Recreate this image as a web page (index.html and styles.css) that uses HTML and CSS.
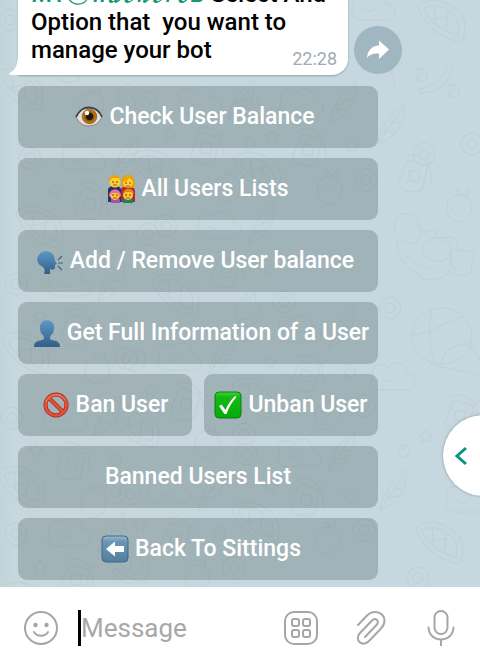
FILE: index.html
```html
<!DOCTYPE html>
<html lang="en">
<head>
<meta charset="utf-8">
<meta name="viewport" content="width=device-width, initial-scale=1">
<title>Chat</title>
<link rel="stylesheet" href="styles.css">
</head>
<body>
<div class="app">
  <main class="chat">
    <svg class="wallpaper" viewBox="0 0 480 587" preserveAspectRatio="xMaxYMax slice" aria-hidden="true">
      <defs>
        <g id="berry"><path d="M0 8c2-9 20-9 23 0 3 10-4 20-12 20S-3 20 0 8zM8 2l2-7 4 5 6-5-1 8"/><path d="M5 9v1m6-2v1m6-1v1M4 15v1m6-2v1m7-1v1M8 21v1m7-2v1"/></g>
        <g id="swirl"><path d="M0 6c2-8 13-7 13 1s-10 8-10 2 6-6 6-2"/></g>
        <g id="star"><path d="M6 0l2 4 5 1-4 3 1 5-4-3-4 3 1-5-4-3 5-1z"/></g>
        <g id="slice"><path d="M0 6C10-6 40 2 46 20c2 8 0 20-2 22C26 40 6 28 0 6zM6 9c12-8 28 0 34 12 1 6 1 10 0 14C26 32 12 24 6 9zM16 6l2 18m12-12l-2 18M14 20l18-4"/></g>
        <g id="ball"><ellipse cx="30" cy="28" rx="30" ry="28"/><path d="M20 2c-4 18-2 36 2 52M0 28c20-4 36-14 50-20M30 56c0-16 14-20 28-20M18 56l62 14-24-36"/></g>
        <g id="cat"><path d="M4 20C-4 4 14-4 24 6l6 14 14-2c-2 8 6 8 10 8 8-4 14 4 10 12l18 2c0 8-4 12-2 20-8 6-18 4-22-2-6 12-30 14-34 2-12-4-22-20-18-34M10 28c8 6 16 6 20-8M30 36c6-14 24-14 30 2-2 14-26 16-30-2M58 40c2 8 0 14 6 18M12 44c10 4 12 10 24 12"/></g>
        <g id="cup"><path d="M10 2L30 8l-6 24c-8 4-20 2-24-6zM30 8l6-6M12 12l10 2-2 10-10-2zM6 0c4-6 18-4 26 8M32 12l2 14"/></g>
        <g id="cloud"><path d="M2 14C-4 4 10-2 16 6c6-10 20-4 18 6 12 0 12 16 0 16H12C2 30-4 20 2 14zM10 16c4 4 10 4 14 0"/></g>
        <g id="leaf"><path d="M0 40C2 22 14 8 26 0c2 14-4 32-26 40zM0 40L24 4M8 28l10-2M12 20l10-2M6 32l2-12"/></g>
        <g id="ring"><circle cx="10" cy="10" r="11"/><circle cx="10" cy="10" r="5"/></g>
        <g id="patch"><use href="#ring" x="6" y="8"/><use href="#cloud" x="48" y="2"/><use href="#leaf" x="98" y="-4"/><use href="#star" x="34" y="44"/><use href="#cup" x="60" y="46"/><use href="#swirl" x="112" y="52"/><use href="#slice" x="2" y="66"/><use href="#berry" x="86" y="90"/><use href="#ring" x="124" y="84"/></g>
      </defs>
      <use href="#patch" x="-6" y="2"/><use href="#patch" x="130" y="84"/><use href="#patch" x="14" y="140"/>
      <use href="#patch" x="232" y="86"/><use href="#patch" x="150" y="208"/><use href="#patch" x="0" y="266"/>
      <use href="#patch" x="230" y="312"/><use href="#patch" x="110" y="340"/><use href="#patch" x="-4" y="400"/>
      <use href="#patch" x="230" y="436"/><use href="#patch" x="100" y="474"/><use href="#patch" x="0" y="516"/>
      <use href="#slice" x="418" y="0"/><use href="#cloud" x="352" y="-8"/><path d="M418 90c14-4 22-8 30-24M418 92c18 4 32-10 34-24M394 66c-8 10 6 14-2 24"/>
      <use href="#swirl" x="446" y="84"/><use href="#leaf" x="378" y="104"/><use href="#swirl" x="414" y="68"/>
      <use href="#ring" x="462" y="134"/><use href="#cup" x="398" y="158"/><use href="#ring" x="414" y="144"/>
      <use href="#berry" x="448" y="194"/><use href="#cat" x="392" y="212"/><use href="#ring" x="380" y="298"/>
      <use href="#ball" x="412" y="308"/><use href="#cloud" x="372" y="362"/><use href="#cup" x="444" y="398"/>
      <use href="#star" x="420" y="430"/><use href="#swirl" x="396" y="444"/><use href="#leaf" x="380" y="470"/>
      <use href="#slice" x="416" y="522"/><use href="#ring" x="408" y="568"/><use href="#cloud" x="446" y="484"/>
    </svg>

    <div class="message-row">
      <article class="bubble">
        <p class="bubble-text"><a class="bubble-link" href="#">MYⓂ<span class="script">𝓗𝓪𝓬𝓴𝓮𝓻𝓸</span>B</a> Select And Option that&nbsp; you want to manage your bot</p>
        <time class="bubble-time">22:28</time>
        <svg class="tail" viewBox="0 0 10 20" aria-hidden="true"><path d="M10 0v20H1c-1 0-1-1 0-2C6 15 9 10 9 0z"/></svg>
      </article>
      <button class="share" type="button" aria-label="Share">
        <svg viewBox="0 0 24 22" aria-hidden="true"><path d="M13 1.500L23 10.500 13 20v-5.500C7 14 3.500 15.500 1 19 1.500 11 6 7 13 6.500z"/></svg>
      </button>
    </div>

    <div class="keyboard">
      <button class="key trailing" type="button">
        <svg class="emoji" viewBox="0 0 28 28" aria-hidden="true">
          <defs><radialGradient id="iris"><stop offset=".3" stop-color="#3b210b"/><stop offset=".6" stop-color="#98600e"/><stop offset="1" stop-color="#c08317"/></radialGradient></defs>
          <path d="M1 14C5 7 9 5 14 5s10 3 13 9c-3 6-7 9-13 9S4 20 1 14z" fill="#e3dddc" stroke="#8b8585"/>
          <path d="M1 14C5 6 9 4.500 14 4.500S24 7 27 14" fill="none" stroke="#42454a" stroke-width="1.800"/>
          <circle cx="14.500" cy="13.500" r="7.300" fill="url(#iris)" stroke="#70480f" stroke-width=".6"/><circle cx="14.500" cy="13.500" r="3.400" fill="#25160b"/><circle cx="12" cy="10" r="2.200" fill="#fff"/>
        </svg><span>Check User Balance</span>
      </button>
      <button class="key" type="button">
        <svg class="emoji" viewBox="0 0 28 28" aria-hidden="true">
          <path d="M1 27V15c0-3 3-4 7-4s6 2 6 4v12z" fill="#25326f"/><path d="M14 27V15c0-3 3-4 7-4s7 2 7 5v11z" fill="#b32735"/>
          <path d="M15 12c-1-8 1-12 6-12s8 5 6 13z" fill="#e89b05"/><circle cx="8" cy="7" r="5.500" fill="#ffcd35"/><path d="M2 7c-1-9 13-9 12 0l-2-4H5z" fill="#eaa600"/>
          <circle cx="21" cy="7.500" r="5" fill="#ffd33e"/><path d="M16 7c3 0 5-2 6-4l5 4c-1-8-10-9-11 0z" fill="#eda508"/>
          <path d="M4 28v-4h9v4z" fill="#a550b4"/><path d="M16 28v-4h10v4z" fill="#138857"/>
          <circle cx="8" cy="20" r="5" fill="#ffc53a"/><path d="M2 22c-1-10 13-10 12 0l-3-4H5z" fill="#ed69a5"/><circle cx="21" cy="20" r="5" fill="#ffc53a"/><path d="M16 19c0-7 11-7 11 0l-3-2h-5z" fill="#d88b10"/>
          <g fill="#54320b"><circle cx="6" cy="7" r=".8"/><circle cx="10" cy="7" r=".8"/><circle cx="19" cy="8" r=".8"/><circle cx="23" cy="8" r=".8"/><circle cx="6" cy="20" r=".8"/><circle cx="10" cy="20" r=".8"/><circle cx="19" cy="20" r=".8"/><circle cx="23" cy="20" r=".8"/></g>
          <path d="M6 10h4M19 11h4M6 23h4M19 23h4" stroke="#ba4f23"/>
        </svg><span>All Users Lists</span>
      </button>
      <button class="key trailing" type="button">
        <svg class="emoji" viewBox="0 0 28 28" aria-hidden="true">
          <defs><linearGradient id="blue" x1="0" y1="0" x2="0" y2="1"><stop stop-color="#5b98c3"/><stop offset="1" stop-color="#315f88"/></linearGradient></defs>
          <path d="M8 27c1-3 1-5-1-7C1 18 0 11 3 8c4-6 13-4 15 1l1 5 2 3-2 1v3c-1 2-3 2-5 1v5z" fill="url(#blue)"/><path d="M22 13l4-4M22 16h5M22 19l4 4" stroke="#46677c" stroke-width="1.200"/>
        </svg><span>Add / Remove User balance</span>
      </button>
      <button class="key leading" type="button">
        <svg class="emoji" viewBox="0 0 28 28" aria-hidden="true"><path d="M1 28c0-5 3-6 8-7 3-1 2-3 1-5-3-2-3-6-3-8 0-9 14-9 14 0 0 2 0 6-3 8-1 2-2 4 1 5 5 1 8 2 8 7z" fill="url(#blue)"/></svg><span>Get Full Information of a User</span>
      </button>
      <div class="key-row">
        <button class="key" type="button">
          <svg class="emoji" viewBox="0 0 28 28" aria-hidden="true"><g fill="none"><circle cx="14" cy="14" r="10.500" stroke="#9f281b" stroke-width="4"/><path d="M7 7l14 14" stroke="#9f281b" stroke-width="4"/><circle cx="14" cy="14" r="10.500" stroke="#e6503a" stroke-width="2.600"/><path d="M7 7l14 14" stroke="#e6503a" stroke-width="2.600"/><path d="M4 11c3-8 14-10 19-2" stroke="#f19a80" stroke-width=".8"/></g></svg><span>Ban User</span>
        </button>
        <button class="key" type="button">
          <svg class="emoji" viewBox="0 0 28 28" aria-hidden="true"><defs><linearGradient id="green" x1="0" y1="0" x2="0" y2="1"><stop stop-color="#3fd23b"/><stop offset=".2" stop-color="#14b814"/><stop offset="1" stop-color="#05ad0a"/></linearGradient></defs><rect x="1" y="1" width="26" height="26" rx="4" fill="url(#green)" stroke="#087f16"/><path d="M5 15l2.500-1.500 4 5.500C14 13 17 9 21 5l1.500 1C18 11 15 16 12.500 23h-2z" fill="#fff"/></svg><span>Unban User</span>
        </button>
      </div>
      <button class="key" type="button"><span>Banned Users List</span></button>
      <button class="key leading" type="button">
        <svg class="emoji" viewBox="0 0 28 28" aria-hidden="true"><defs><linearGradient id="steel" x1="0" y1="0" x2="0" y2="1"><stop stop-color="#9abbd0"/><stop offset=".2" stop-color="#6b97b5"/><stop offset="1" stop-color="#537f9f"/></linearGradient></defs><rect x="1" y="1" width="26" height="26" rx="4" fill="url(#steel)" stroke="#416883"/><path d="M5 14l9-7.500V11h9v6h-9v4.500z" fill="#fff"/></svg><span>Back To Sittings</span>
      </button>
    </div>

    <button class="side-toggle" type="button" aria-label="Open panel">
      <svg viewBox="0 0 14 20" aria-hidden="true"><path d="M12 2L3 10l9 8"/></svg>
    </button>
  </main>

  <form class="composer">
    <button class="tool" type="button" aria-label="Emoji">
      <svg viewBox="0 0 36 36" aria-hidden="true"><circle cx="18" cy="18" r="16"/><path d="M11 22c3 5 11 5 14 0"/><circle class="dot" cx="12.500" cy="15" r="2.200"/><circle class="dot" cx="23.500" cy="15" r="2.200"/></svg>
    </button>
    <input class="entry" type="text" placeholder="Message" aria-label="Message">
    <div class="tools">
      <button class="tool" type="button" aria-label="Bot commands">
        <svg viewBox="0 0 36 36" aria-hidden="true"><rect x="2" y="2" width="32" height="32" rx="9"/><rect x="9" y="9" width="7" height="7" rx="2"/><rect x="20" y="9" width="7" height="7" rx="2"/><rect x="9" y="20" width="7" height="7" rx="2"/><rect x="20" y="20" width="7" height="7" rx="2"/></svg>
      </button>
      <button class="tool" type="button" aria-label="Attach file">
        <svg viewBox="0 0 36 36" aria-hidden="true"><path d="M5 15L14 5.500c5-5 12-4 15-1s4 9-1 14L15.500 31.500c-3 3-7 2.500-9 .5s-2.500-6 .5-9L19 10.500c2-2 4-1.500 5-.5s1.500 3-.5 5L12 27"/></svg>
      </button>
      <button class="tool" type="button" aria-label="Record voice">
        <svg viewBox="0 0 36 36" aria-hidden="true"><rect x="11.500" y="1" width="13" height="23" rx="6.500"/><path d="M5.500 17.500C6 25 11 29.500 18 29.500S30 25 30.500 17.500M18 29.500V36"/></svg>
      </button>
    </div>
  </form>
</div>
</body>
</html>
```
FILE: styles.css
```css
* {
  box-sizing: border-box;
}

body {
  margin: 0;
  font-family: Roboto, "Liberation Sans", sans-serif;
}

button {
  border: 0;
  padding: 0;
  font: inherit;
  cursor: pointer;
}

.app {
  display: flex;
  flex-direction: column;
  height: 100vh;
}

.chat {
  position: relative;
  flex: 1;
  min-height: 0;
  display: flex;
  flex-direction: column;
  justify-content: flex-end;
  gap: 11px;
  padding: 0 102px 7px 18px;
  overflow: hidden;
  background: linear-gradient(90deg, #c1d5d9, #c8d7de 20px, #c7d7df);
}

.wallpaper {
  position: absolute;
  inset: 0;
  width: 100%;
  height: 100%;
  fill: none;
  stroke: #b9cccf;
  stroke-width: 1;
  opacity: 0.6;
}

.message-row {
  position: relative;
  display: flex;
  align-items: flex-end;
  gap: 6px;
  margin-right: -24px;
}

.bubble {
  position: relative;
  flex: 1;
  padding: 8px 12px 11px 13px;
  border-radius: 16px 16px 16px 0;
  background: #fff;
  box-shadow: 0 1px 2px #8fa3ab;
}

.bubble-text {
  margin: 0;
  font-size: 24px;
  font-weight: 500;
  line-height: 28px;
  color: #000;
}

.bubble-link {
  color: #169873;
  text-decoration: none;
}

.script {
  font-family: "DejaVu Math TeX Gyre", "DejaVu Serif", serif;
  font-size: 16px;
  font-weight: 400;
  line-height: 20px;
}

.bubble-time {
  position: absolute;
  right: 11px;
  bottom: 5px;
  font-size: 18px;
  line-height: 22px;
  color: #a1aab3;
}

.tail {
  position: absolute;
  left: -9px;
  bottom: 0;
  width: 10px;
  height: 20px;
  fill: #fff;
}

.share {
  display: grid;
  place-items: center;
  width: 48px;
  height: 48px;
  margin-bottom: 1px;
  border-radius: 50%;
  background: #a0b6c0;
}

.share svg {
  width: 24px;
  height: 22px;
  fill: #fff;
}

.keyboard {
  position: relative;
  display: flex;
  flex-direction: column;
  gap: 10px;
}

.key-row {
  display: flex;
  gap: 12px;
}

.key {
  flex: 1 0 auto;
  display: flex;
  align-items: center;
  justify-content: center;
  gap: 6px;
  height: 62px;
  border-radius: 9px;
  background: rgba(90, 112, 113, 0.35);
  color: #fff;
  font-size: 23px;
  font-weight: 500;
  line-height: 28px;
  white-space: nowrap;
}

.key-row .key {
  flex: 1 1 0;
}

.trailing {
  padding-right: 6px;
}

.leading {
  padding-left: 6px;
}

.emoji {
  width: 28px;
  height: 28px;
}

.side-toggle {
  position: absolute;
  right: -44px;
  bottom: 91px;
  width: 81px;
  height: 81px;
  padding-left: 11px;
  border-radius: 50%;
  background: #fff;
  box-shadow: 0 0 3px #83949b;
}

.side-toggle svg {
  display: block;
  width: 14px;
  height: 20px;
  fill: none;
  stroke: #0e9280;
  stroke-width: 3;
}

.composer {
  display: flex;
  align-items: center;
  height: 77px;
  padding: 4px 21px 0 23px;
  background: #fff;
}

.tool {
  flex: none;
  width: 36px;
  height: 36px;
  background: none;
}

.tool svg {
  display: block;
  width: 36px;
  height: 36px;
  fill: none;
  stroke: #a6a6a6;
  stroke-width: 2;
  stroke-linecap: round;
}

.tool .dot {
  fill: #a6a6a6;
  stroke: none;
}

.entry {
  flex: 1;
  min-width: 0;
  height: 36px;
  margin-left: 19px;
  padding: 0;
  border: 0;
  border-left: 3px solid #000;
  outline: 0;
  background: none;
  font: 400 26px/36px Roboto, "Liberation Sans", sans-serif;
  color: #000;
}

.entry::placeholder {
  color: #a8a8a8;
  opacity: 1;
}

.tools {
  display: flex;
  gap: 34px;
}
```
